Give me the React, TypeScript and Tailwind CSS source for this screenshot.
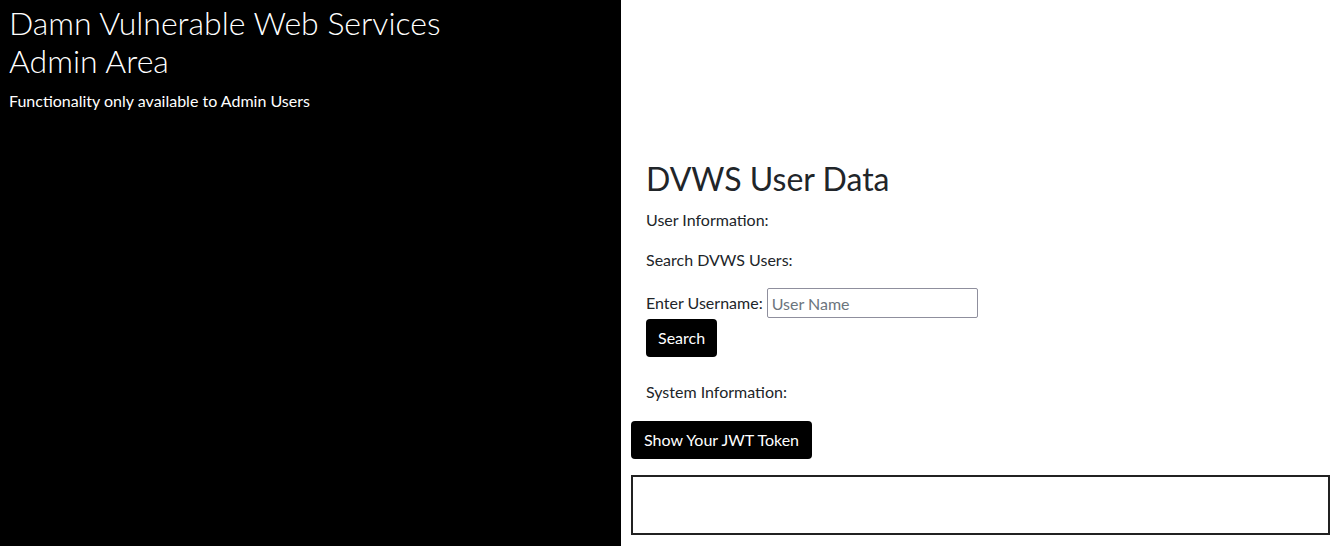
import React from 'react'

export default function App() {
  return (
    <div
      className="flex w-[1340px] h-[546px] overflow-hidden bg-white text-[#212529]"
      style={{ fontFamily: 'Lato, "Liberation Sans", sans-serif' }}
    >
      {/* Left admin banner */}
      <div className="w-[621px] shrink-0 bg-black text-white px-[9px] pt-[4px]">
        <h1 className="text-[32px] font-light leading-[38px]">
          Damn Vulnerable Web Services
          <br />
          Admin Area
        </h1>
        <p className="mt-[11px] text-[16px] leading-[20px]">
          Functionality only available to Admin Users
        </p>
      </div>

      {/* Right content */}
      <div className="flex-1 px-[10px] pt-[160px]">
        <div className="px-[15px]">
          <h2 className="text-[32px] leading-[38px] font-normal">DVWS User Data</h2>
          <p className="mt-[12px] text-[16px] leading-[20px]">User Information:</p>
          <p className="mt-[20px] text-[16px] leading-[20px]">Search DVWS Users:</p>
          <div className="mt-[18px] flex items-center text-[16px]">
            <label>Enter Username:</label>
            <input
              type="text"
              placeholder="User Name"
              className="ml-[4px] w-[211px] h-[30px] border border-[#8f8f9d] rounded-[2px] px-[4px] text-[16px] placeholder:text-[#6c757d] outline-none"
            />
          </div>
          <button className="mt-[1px] h-[38px] px-[12px] rounded-[4px] bg-black text-white text-[16px]">
            Search
          </button>
          <p className="mt-[25px] text-[16px] leading-[20px]">System Information:</p>
        </div>
        <button className="mt-[19px] h-[38px] px-[13px] rounded-[4px] bg-black text-white text-[16px]">
          Show Your JWT Token
        </button>
        <div className="mt-[16px] h-[60px] border-2 border-[#212121]" />
      </div>
    </div>
  )
}
